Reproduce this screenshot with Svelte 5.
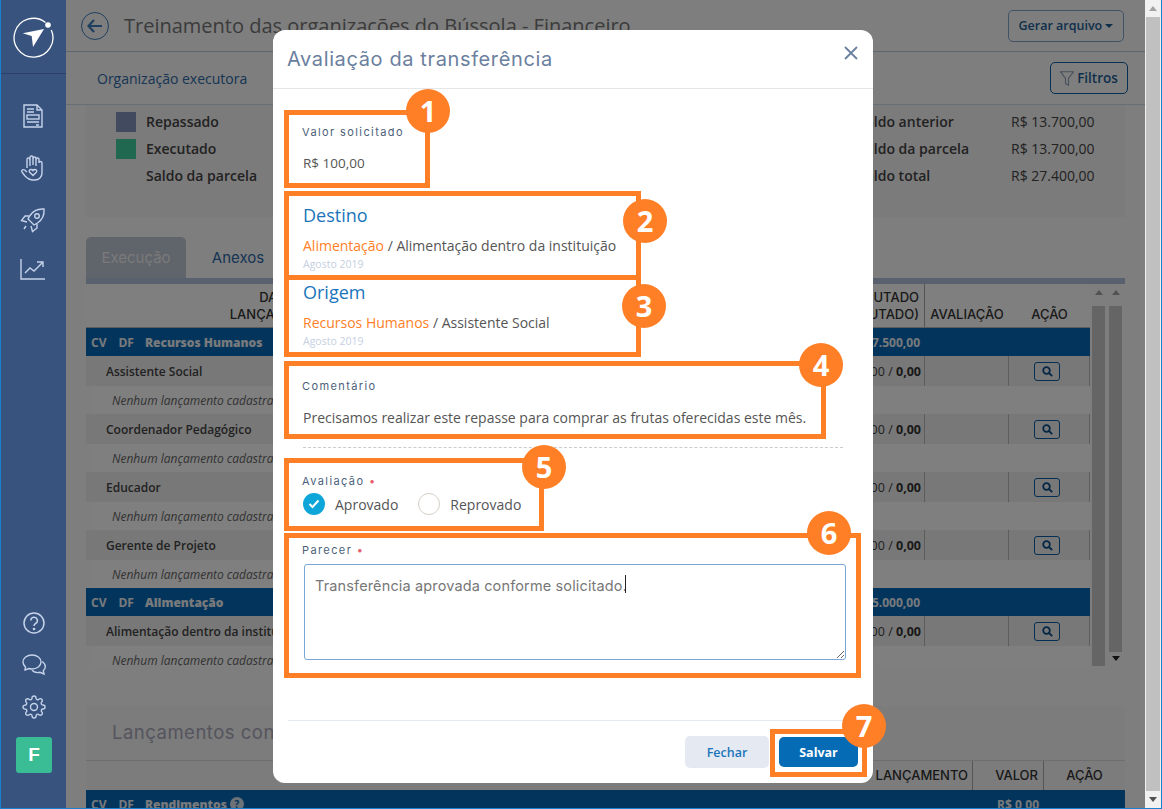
<script>
	const groups = [
		{ name: 'Recursos Humanos', total: '7.500,00', items: ['Assistente Social', 'Coordenador Pedagógico', 'Educador', 'Gerente de Projeto'] },
		{ name: 'Alimentação', total: '5.000,00', items: ['Alimentação dentro da instituição'] }
	];
	const badges = [
		{ n: 1, x: 155, y: 81 },
		{ n: 2, x: 372, y: 191 },
		{ n: 3, x: 371, y: 276 },
		{ n: 4, x: 548, y: 335 },
		{ n: 5, x: 271, y: 437 },
		{ n: 6, x: 556, y: 503 },
		{ n: 7, x: 591, y: 696 }
	];
	const parecer = 'Transferência aprovada conforme solicitado.';
</script>

<div class="frame">
	<aside class="sidebar">
		<div class="logo">
			<svg width="42" height="42" viewBox="0 0 42 42" fill="none">
				<path d="M32.500 5.500A19.400 19.400 0 1 0 38.300 13" stroke="#fff" stroke-width="1.300" />
				<circle cx="35" cy="8" r="2.800" fill="#fff" />
				<path d="M9.700 16.300 31 12 20 30l-1.300-11z" fill="#fff" />
			</svg>
		</div>
		<nav class="nav">
			<svg width="24" height="26" viewBox="0 0 24 26" fill="none" stroke="#c5d3ea" stroke-width="1.400">
				<path d="M3 2h13l5 5v17H3z" />
				<path d="M16 2v5h5M6 6h7M6 9h7M6 19h12M15 22h3" />
				<rect x="6" y="12" width="12" height="4" />
			</svg>
			<svg width="26" height="28" viewBox="0 0 26 28" fill="none" stroke="#c5d3ea" stroke-width="1.400">
				<path d="M7 14V5.500a1.500 1.500 0 0 1 3 0V3.500a1.500 1.500 0 0 1 3 0v1a1.500 1.500 0 0 1 3 0v1a1.500 1.500 0 0 1 3 0v3.500a1.500 1.500 0 0 1 3 0V19c0 4-3 7-7 7h-2c-4 0-6-2-8-4l-3-4c-1-1.500 1-3 2.500-2L7 18" />
				<path d="M13 21.500l-3.300-3.300c-1.600-2 1.800-4 3.300-1.700 1.500-2.300 4.900-.3 3.300 1.700z" />
				<path d="M10 5v7M13 4v7M16 5v7" />
			</svg>
			<svg width="26" height="26" viewBox="0 0 26 26" fill="none" stroke="#c5d3ea" stroke-width="1.400">
				<path d="M24 2c-6-.5-11 2-14 6.500L8 12l6 6 3.500-2C22 13 24.500 8 24 2z" />
				<circle cx="17" cy="9" r="2.300" />
				<path d="M9 9H5l-3.500 4.500L7 15M17 17v4l-4.500 3.500L11 19M6 19l-2 3" />
			</svg>
			<svg width="28" height="24" viewBox="0 0 28 24" fill="none" stroke="#c5d3ea" stroke-width="1.400">
				<path d="M2 1v20h24" />
				<path d="M6 15l5-5 4 3 8-8M18 4h6v5" />
			</svg>
		</nav>
		<div class="nav nav-bottom">
			<svg width="24" height="24" viewBox="0 0 24 24" fill="none" stroke="#c5d3ea" stroke-width="1.500">
				<circle cx="12" cy="12" r="10" />
				<path d="M8.800 9.500a3.300 3.300 0 1 1 4.800 3c-1 .6-1.600 1.100-1.600 2.500" />
				<circle cx="12" cy="18" r=".6" />
			</svg>
			<svg width="26" height="24" viewBox="0 0 26 24" fill="none" stroke="#c5d3ea" stroke-width="1.400">
				<path d="M11 2C6 2 2 5 2 9c0 2 1 3.500 2.500 5L4 17l4-1.500c1 .3 2 .5 3 .5 5 0 9-3 9-7s-4-7-9-7z" />
				<path d="M21 8.500c2 1.200 3.300 3 3.300 5 0 1.600-.7 3-2 4l.7 3.500-4-1.700c-3 .7-6 0-8-2" />
			</svg>
			<svg width="24" height="24" viewBox="0 0 24 24" fill="none" stroke="#c5d3ea" stroke-width="1.400">
				<circle cx="12" cy="12" r="3.500" />
				<path d="M19.400 15a1.650 1.650 0 0 0 .33 1.820l.06.06a2 2 0 0 1 0 2.830 2 2 0 0 1-2.830 0l-.06-.06a1.650 1.650 0 0 0-1.820-.33 1.650 1.650 0 0 0-1 1.510V21a2 2 0 0 1-2 2 2 2 0 0 1-2-2v-.09A1.650 1.650 0 0 0 9 19.400a1.650 1.650 0 0 0-1.820.33l-.06.06a2 2 0 0 1-2.830 0 2 2 0 0 1 0-2.830l.06-.06a1.650 1.650 0 0 0 .33-1.820 1.650 1.650 0 0 0-1.510-1H3a2 2 0 0 1-2-2 2 2 0 0 1 2-2h.09A1.650 1.650 0 0 0 4.600 9a1.650 1.650 0 0 0-.33-1.820l-.06-.06a2 2 0 0 1 0-2.830 2 2 0 0 1 2.830 0l.06.06a1.650 1.650 0 0 0 1.820.33H9a1.650 1.650 0 0 0 1-1.510V3a2 2 0 0 1 2-2 2 2 0 0 1 2 2v.09a1.650 1.650 0 0 0 1 1.510 1.650 1.650 0 0 0 1.820-.33l.06-.06a2 2 0 0 1 2.830 0 2 2 0 0 1 0 2.830l-.06.06a1.650 1.650 0 0 0-.33 1.820V9a1.650 1.650 0 0 0 1.510 1H21a2 2 0 0 1 2 2 2 2 0 0 1-2 2h-.09a1.650 1.650 0 0 0-1.510 1z" />
			</svg>
			<span class="avatar">F</span>
		</div>
	</aside>

	<div class="page">
		<main class="main">
			<header class="topbar">
				<span class="back">
					<svg width="16" height="14" viewBox="0 0 16 14" fill="none" stroke="#3f7fc0" stroke-width="2.200">
						<path d="M15 7H2M7 1 1.500 7 7 13" />
					</svg>
				</span>
				<h1>Treinamento das organizações do Bússola - Financeiro</h1>
				<button class="btn-file" type="button">Gerar arquivo <i class="caret"></i></button>
			</header>

			<div class="subbar">
				<span>Organização executora</span>
				<button class="btn-filter" type="button">
					<svg width="14" height="15" viewBox="0 0 14 15" fill="none" stroke="#8ea0b8" stroke-width="1.100">
						<path d="M.6.800h12.800L8.500 7.500v6.700l-3-1.600V7.500z" />
					</svg>
					Filtros
				</button>
			</div>

			<section class="summary">
				<div class="legend">
					<div><i class="sq navy"></i>Repassado</div>
					<div><i class="sq green"></i>Executado</div>
					<div><i class="sq"></i>Saldo da parcela</div>
				</div>
				<div class="balances">
					<div><span>Saldo anterior</span><b>R$ 13.700,00</b></div>
					<div><span>Saldo da parcela</span><b>R$ 13.700,00</b></div>
					<div><span>Saldo total</span><b>R$ 27.400,00</b></div>
				</div>
			</section>

			<div class="tabs">
				<span class="tab active">Execução</span>
				<span class="tab">Anexos</span>
			</div>

			<div class="table-wrap">
				<div class="table">
					<div class="thead">
						<div class="th-date">DATA<br />LANÇAMENTO</div>
						<div class="th-exec">EXECUTADO<br />(EXECUTADO)</div>
						<div class="th-col">AVALIAÇÃO</div>
						<div class="th-col last">AÇÃO</div>
					</div>
					{#each groups as group}
						<div class="group">
							<span class="codes">CV</span><span class="codes">DF</span>
							<b>{group.name}</b>
							<em>R$ {group.total}</em>
						</div>
						{#each group.items as item}
							<div class="row">
								<span class="row-name">{item}</span>
								<span class="row-val">0,00 / <b>0,00</b></span>
								<span class="cell"></span>
								<span class="cell">
									<span class="btn-view">
										<svg width="11" height="11" viewBox="0 0 11 11" fill="none" stroke="#0b4f8c" stroke-width="1.800">
											<circle cx="4.500" cy="4.500" r="3.300" /><path d="M7 7l3.200 3.200" />
										</svg>
									</span>
								</span>
							</div>
							<div class="empty">Nenhum lançamento cadastrado</div>
						{/each}
					{/each}
				</div>
				<div class="bars">
					<div class="bar"><i class="up"></i><span></span></div>
					<div class="bar"><i class="up"></i><span></span><i class="down"></i></div>
				</div>
			</div>

			<section class="launches">
				<h2>Lançamentos contábeis</h2>
				<div class="l-head">
					<span>TIPO DO LANÇAMENTO</span>
					<span class="l-val">VALOR</span>
					<span class="l-act">AÇÃO</span>
				</div>
				<div class="group">
					<span class="codes">CV</span><span class="codes">DF</span>
					<b>Rendimentos</b><i class="q">?</i>
					<em class="l-sum">R$ 0,00</em>
				</div>
			</section>
		</main>
		<div class="scrollbar"><i class="up"></i><span></span><i class="down"></i></div>
	</div>

	<div class="overlay"></div>

	<div class="modal">
		<header class="m-head">
			<h3>Avaliação da transferência</h3>
			<svg width="14" height="14" viewBox="0 0 14 14" stroke="#6b809e" stroke-width="1.800"><path d="M1 1l12 12M13 1 1 13" /></svg>
		</header>

		<div class="m-body">
			<div class="mark m1">
				<label>Valor solicitado</label>
				<p>R$ 100,00</p>
			</div>
			<div class="mark m2">
				<h4>Destino</h4>
				<p><span>Alimentação</span> / Alimentação dentro da instituição</p>
				<small>Agosto 2019</small>
			</div>
			<div class="mark m3">
				<h4>Origem</h4>
				<p><span>Recursos Humanos</span> / Assistente Social</p>
				<small>Agosto 2019</small>
			</div>
			<div class="mark m4">
				<label>Comentário</label>
				<p>Precisamos realizar este repasse para comprar as frutas oferecidas este mês.</p>
			</div>
			<hr />
			<div class="mark m5">
				<label>Avaliação <i>•</i></label>
				<div class="radios">
					<span class="radio on">
						<svg width="12" height="10" viewBox="0 0 12 10" fill="none" stroke="#fff" stroke-width="2"><path d="M1.500 5l3 3 6-6.500" /></svg>
					</span>
					<span class="r-text">Aprovado</span>
					<span class="radio"></span>
					<span class="r-text">Reprovado</span>
				</div>
			</div>
			<div class="mark m6">
				<label>Parecer <i>•</i></label>
				<div class="area">
					<textarea readonly value={parecer}></textarea>
					<b class="cursor"></b>
				</div>
			</div>
		</div>

		<footer class="m-foot">
			<button class="b-close" type="button">Fechar</button>
			<div class="m7"><button class="b-save" type="button">Salvar</button></div>
		</footer>

		{#each badges as b}
			<span class="badge" style="left: {b.x - 22}px; top: {b.y - 22}px">{b.n}</span>
		{/each}
	</div>
</div>

<style>
	:global(body) {
		margin: 0;
		overflow: hidden;
	}

	.frame {
		position: relative;
		display: flex;
		width: 1162px;
		height: 809px;
		box-sizing: border-box;
		border-left: 1px solid #1a80d0;
		border-right: 1px solid #1a80d0;
		border-bottom: 1px solid #1a80d0;
		overflow: hidden;
		font-family: 'Open Sans', sans-serif;
		color: #444;
		background: #fff;
	}

	.sidebar {
		position: relative;
		z-index: 2;
		flex: 0 0 65px;
		display: flex;
		flex-direction: column;
		background: #39537f;
	}

	.logo {
		height: 74px;
		box-sizing: border-box;
		padding-top: 17px;
		display: flex;
		justify-content: center;
		align-items: flex-start;
		border-bottom: 1px solid #2b4069;
	}

	.nav {
		display: flex;
		flex-direction: column;
		align-items: center;
		gap: 25px;
		margin-left: -2px;
		padding-top: 29px;
		color: #c5d3ea;
	}

	.nav-bottom {
		margin-top: auto;
		margin-left: 0;
		gap: 18px;
		padding: 0 0 35px;
	}

	.avatar {
		width: 36px;
		height: 36px;
		margin-left: 1px;
		border-radius: 3px;
		background: #3abd94;
		color: #fff;
		font: 700 19px/36px 'Liberation Sans', sans-serif;
		text-align: center;
	}

	.page {
		flex: 1;
		display: flex;
		min-width: 0;
	}

	.main {
		flex: 1;
		min-width: 0;
		background: #fcfcfc;
		overflow: hidden;
	}

	.scrollbar {
		flex: 0 0 16px;
		display: flex;
		flex-direction: column;
		align-items: center;
		box-sizing: border-box;
		background: #f1f1f1;
		position: relative;
		z-index: 2;
	}

	.scrollbar span {
		flex: 1;
		width: 14px;
		background: #c0c0c0;
	}

	.up,
	.down {
		display: block;
		flex: none;
		width: 0;
		height: 0;
		margin: 6px 0 6px;
		border-left: 4px solid transparent;
		border-right: 4px solid transparent;
	}

	.up {
		border-bottom: 5px solid #a3a3a3;
	}

	.down {
		border-top: 5px solid #505050;
	}

	.overlay {
		position: absolute;
		inset: 0;
		z-index: 1;
		background: rgba(0, 0, 0, 0.5);
	}

	.topbar {
		height: 52px;
		box-sizing: border-box;
		display: flex;
		align-items: center;
		padding: 0 21px 0 15px;
		border-bottom: 1px solid #b8cfe0;
	}

	.back {
		width: 26px;
		height: 26px;
		border: 1px solid #3f7fc0;
		border-radius: 50%;
		display: flex;
		align-items: center;
		justify-content: center;
		margin-right: 15px;
	}

	h1 {
		flex: 1;
		margin: 0;
		font-size: 20px;
		font-weight: 400;
		color: #777;
		white-space: nowrap;
	}

	.btn-file {
		width: 116px;
		height: 32px;
		padding: 0;
		border: 1px solid #7ea6c8;
		border-radius: 5px;
		background: transparent;
		color: #1c5f98;
		font: 600 12.500px 'Open Sans', sans-serif;
	}

	.caret {
		display: inline-block;
		vertical-align: 2px;
		border-left: 4px solid transparent;
		border-right: 4px solid transparent;
		border-top: 4px solid #1c5f98;
	}

	.subbar {
		height: 53px;
		box-sizing: border-box;
		display: flex;
		align-items: center;
		justify-content: space-between;
		padding: 0 17px 0 31px;
		border-bottom: 1px solid #cfdde8;
		font-size: 14px;
		color: #2f6aa8;
	}

	.btn-filter {
		width: 78px;
		height: 32px;
		display: flex;
		align-items: center;
		justify-content: center;
		gap: 3px;
		padding: 0;
		border: 1px solid #0d5ea6;
		border-radius: 5px;
		background: transparent;
		color: #1c5f98;
		font: 600 13.500px 'Open Sans', sans-serif;
	}

	.summary {
		margin: 0 20px 0 20px;
		height: 112px;
		box-sizing: border-box;
		padding: 3px 30px 0;
		display: flex;
		justify-content: space-between;
		background: #f6f6f6;
		font-size: 14px;
		color: #444;
	}

	.legend div,
	.balances div {
		height: 27px;
		display: flex;
		align-items: center;
		font-weight: 600;
	}

	.sq {
		width: 20px;
		height: 20px;
		margin-right: 10px;
		background: transparent;
	}

	.navy {
		background: #8294bc;
	}

	.green {
		background: #40d0a0;
	}

	.balances {
		width: 237px;
	}

	.balances span {
		width: 153px;
	}

	.balances b {
		font-weight: 400;
	}

	.tabs {
		margin: 20px 0 0 20px;
		display: flex;
		height: 41px;
	}

	.tab {
		width: 100px;
		text-align: center;
		font: 400 15px/41px Inter, sans-serif;
		color: #2f6aa8;
	}

	.tab + .tab {
		margin-left: 2px;
	}

	.tab.active {
		border-radius: 5px 5px 0 0;
		background: #c0c8d6;
		color: #f4f4f4;
	}

	.table-wrap {
		margin: 0 20px;
		height: 382px;
		display: flex;
		overflow: hidden;
		border-top: 6px solid #b4c2dc;
	}

	.table {
		width: 1004px;
		flex: none;
	}

	.thead {
		display: grid;
		grid-template-columns: 1fr 160px 84px 81px;
		height: 44px;
		font: 500 13px/17px Inter, sans-serif;
		color: #333;
		text-align: center;
		border-bottom: 1px solid #bbb;
		box-sizing: border-box;
		background: #fff;
	}

	.th-date {
		padding: 5px 0 0 0;
		width: 380px;
		text-align: center;
	}

	.th-exec {
		padding-top: 5px;
		border-right: 1px solid #aaa;
		text-align: right;
		padding-right: 5px;
		white-space: nowrap;
	}

	.th-col {
		padding-top: 22px;
		white-space: nowrap;
	}

	.th-col.last {
		border-right: 0;
	}

	.group {
		height: 28px;
		display: flex;
		align-items: center;
		padding: 0 5px;
		background: #066ab8;
		color: #f0f4f8;
		font-size: 12px;
		font-weight: 700;
		white-space: nowrap;
	}

	.codes {
		margin-right: 12px;
	}

	.group b {
		margin-left: -1px;
	}

	.group em {
		margin-left: auto;
		margin-right: 165px;
		font-style: normal;
	}

	.row {
		display: grid;
		grid-template-columns: 1fr 160px 84px 81px;
		height: 30px;
		align-items: center;
		background: #f0f0f0;
		font-size: 12px;
		font-weight: 600;
		color: #444;
	}

	.row-name {
		padding-left: 20px;
	}

	.row-val {
		text-align: right;
		padding-right: 4px;
		font-weight: 400;
		font-size: 12.500px;
	}

	.row-val b {
		color: #333;
	}

	.cell {
		align-self: stretch;
		display: flex;
		align-items: center;
		justify-content: center;
		border-right: 1px solid #bbb;
		border-left: 1px solid #bbb;
		margin-left: -1px;
	}

	.btn-view {
		width: 24px;
		height: 17px;
		margin-right: 4px;
		display: flex;
		align-items: center;
		justify-content: center;
		border: 1px solid #0b5fa5;
		border-radius: 3px;
	}

	.empty {
		height: 28px;
		line-height: 30px;
		margin-left: 5px;
		padding-left: 21px;
		background: #fff;
		font-size: 12px;
		font-style: italic;
		color: #666;
		white-space: nowrap;
	}

	.bars {
		display: flex;
		gap: 4px;
		margin-left: 2px;
	}

	.bar {
		width: 13px;
		display: flex;
		flex-direction: column;
		align-items: center;
	}

	.bar span {
		flex: 1;
		width: 13px;
		background: #cacaca;
	}

	.bar .up {
		margin: 6px 0 11px;
	}

	.bar .down {
		margin: 4px 0 5px;
		border-top-color: #222;
	}

	.launches {
		margin: 40px 20px 0;
		background: #f8f8f8;
	}

	h2 {
		margin: 0;
		height: 55px;
		box-sizing: border-box;
		padding: 15px 0 0 26px;
		border-bottom: 1px solid #ddd;
		font: 400 18.500px Inter, sans-serif;
		letter-spacing: 0.5px;
		color: #aab;
		white-space: nowrap;
	}

	.l-head {
		display: flex;
		justify-content: flex-end;
		height: 29px;
		font: 500 13px/29px Inter, sans-serif;
		color: #333;
	}

	.l-val {
		width: 65px;
		padding-right: 5px;
		text-align: right;
		border-left: 1px solid #aaa;
		border-right: 1px solid #aaa;
		margin-left: 4px;
	}

	.l-act {
		width: 81px;
		text-align: center;
	}

	.q {
		width: 14px;
		height: 14px;
		margin-left: 3px;
		border-radius: 50%;
		background: #d8e4ee;
		color: #066ab8;
		font-size: 10px;
		font-style: normal;
		line-height: 14px;
		text-align: center;
	}

	.group .l-sum {
		margin-right: 81px;
	}

	.modal {
		position: absolute;
		z-index: 3;
		left: 272px;
		top: 30px;
		width: 600px;
		height: 753px;
		display: flex;
		flex-direction: column;
		border-radius: 12px;
		background: #fff;
	}

	.m-head {
		height: 59px;
		flex: none;
		box-sizing: border-box;
		display: flex;
		align-items: center;
		justify-content: space-between;
		padding: 0 15px 0 15px;
		border-bottom: 1px solid #e6e6e6;
	}

	h3 {
		margin: 0 0 0 -1px;
		font: 400 20px Inter, sans-serif;
		letter-spacing: 0.62px;
		color: #6b809e;
		white-space: nowrap;
	}

	.m-head svg {
		margin-top: -12px;
	}

	.m-body {
		flex: 1;
		padding: 21px 0 0 11px;
	}

	.mark {
		box-sizing: border-box;
		border: 5px solid #ff7f27;
		padding-left: 14px;
		color: #555;
		font-size: 14px;
	}

	.mark p {
		margin: 0;
		white-space: nowrap;
	}

	label {
		display: block;
		margin-left: -1px;
		font: 400 11px/14px Inter, sans-serif;
		letter-spacing: 1.400px;
		color: #4c5f7a;
	}

	label i {
		color: #e8606a;
		font-style: normal;
	}

	.m1 {
		width: 146px;
		height: 78px;
		padding-top: 10px;
	}

	.m1 p {
		margin-top: 15px;
		font-size: 13.500px;
		line-height: 18px;
	}

	.m2,
	.m3 {
		width: 357px;
		height: 89px;
		margin-top: 3px;
		padding-top: 7px;
	}

	.m3 {
		height: 82px;
		margin-top: -5px;
		padding-top: 0;
	}

	h4 {
		margin: 0 0 7px;
		font-size: 18px;
		line-height: 25px;
		font-weight: 400;
		color: #1b75bb;
	}

	.mark p span {
		color: #ff7f27;
	}

	.m2 p,
	.m3 p {
		line-height: 22px;
	}

	small {
		display: block;
		margin-top: 1px;
		font-size: 10.500px;
		line-height: 13px;
		color: #c5cfdf;
	}

	.m4 {
		width: 542px;
		height: 78px;
		margin-top: 4px;
		padding-top: 13px;
	}

	.m4 p {
		margin-top: 15px;
		line-height: 20px;
	}

	hr {
		margin: 8px 30px 0 19px;
		border: 0;
		border-top: 1px dashed #ccc;
	}

	.m5 {
		width: 260px;
		height: 73px;
		margin-top: 10px;
		padding-top: 11px;
	}

	.radios {
		display: flex;
		align-items: center;
		margin-top: 5px;
	}

	.radio {
		flex: none;
		width: 22px;
		height: 22px;
		box-sizing: border-box;
		display: flex;
		align-items: center;
		justify-content: center;
		border: 1px solid #d5d0c8;
		border-radius: 50%;
	}

	.radio.on {
		border: 0;
		background: #0ea5d8;
	}

	.r-text {
		margin: 0 20px 0 10px;
	}

	.m6 {
		width: 577px;
		height: 145px;
		margin-top: 2px;
		padding-top: 5px;
	}

	.area {
		position: relative;
		width: 542px;
		height: 96px;
		margin: 7px 0 0 1px;
	}

	textarea {
		display: block;
		width: 100%;
		height: 100%;
		box-sizing: border-box;
		padding: 11px 10px;
		border: 1px solid #7ba6d8;
		border-radius: 3px;
		outline: 0;
		font: 400 14.500px/20px Inter, sans-serif;
		letter-spacing: 0.14px;
		color: #777;
	}

	.cursor {
		position: absolute;
		left: 321px;
		top: 11px;
		width: 1px;
		height: 18px;
		background: #222;
	}

	.m-foot {
		flex: none;
		height: 62px;
		margin: 0 15px;
		display: flex;
		justify-content: flex-end;
		align-items: flex-start;
		gap: 1px;
		border-top: 1px solid #e3e8f2;
		position: relative;
	}

	.b-close {
		width: 84px;
		height: 32px;
		margin-top: 15px;
		border: 0;
		border-radius: 5px;
		background: #e5eaf2;
		color: #1b75bb;
		font: 600 12.500px 'Open Sans', sans-serif;
	}

	.m7 {
		box-sizing: border-box;
		width: 97px;
		height: 48px;
		margin: 8px -9px 0 0;
		padding: 3px 4px;
		border: 5px solid #ff7f27;
	}

	.b-save {
		display: block;
		width: 79px;
		height: 30px;
		border: 0;
		border-radius: 5px;
		background: #066bb5;
		color: #fff;
		font: 700 12.500px 'Open Sans', sans-serif;
	}

	.badge {
		position: absolute;
		width: 44px;
		height: 44px;
		border-radius: 50%;
		background: #ff7f27;
		color: #fff;
		font: 700 29px/44px 'Open Sans', sans-serif;
		text-align: center;
	}
</style>
